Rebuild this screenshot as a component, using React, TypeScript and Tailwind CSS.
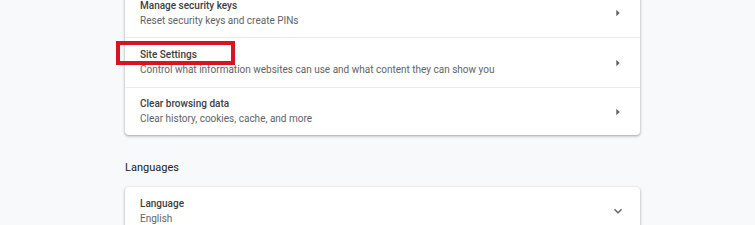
import React from "react";

const Arrow = () => (
  <svg width="16" height="16" viewBox="0 0 24 24" className="shrink-0">
    <path d="M9.5 7l5 5-5 5z" fill="#5f6368" />
  </svg>
);

const Chevron = () => (
  <svg width="16" height="16" viewBox="0 0 24 24" className="shrink-0">
    <path d="M16.59 8.59L12 13.17 7.41 8.59 6 10l6 6 6-6z" fill="#5f6368" />
  </svg>
);

const Row = ({ title, sub, h }: { title: string; sub: string; h: string }) => (
  <div className={`${h} flex items-center justify-between pl-[15px] pr-[14px]`}>
    <div className="flex flex-col">
      <div className="text-[10px] leading-[15px] font-medium text-[#3c4043]">{title}</div>
      <div className="text-[10px] leading-[16px] text-[#5f6368]">{sub}</div>
    </div>
    <Arrow />
  </div>
);

export default function App() {
  return (
    <div
      className="relative w-[755px] h-[225px] overflow-hidden bg-[#f8f9fa]"
      style={{ fontFamily: "Roboto, 'Liberation Sans', sans-serif" }}
    >
      <div className="ml-[125px] w-[515px] -mt-[11px]">
        <div className="bg-white rounded-[4px] shadow-[0_1px_2px_rgba(60,64,67,0.3),0_1px_3px_1px_rgba(60,64,67,0.15)]">
          <Row h="h-[48px]" title="Manage security keys" sub="Reset security keys and create PINs" />
          <div className="border-t border-[#e8eaed]">
            <Row
              h="h-[49px]"
              title="Site Settings"
              sub="Control what information websites can use and what content they can show you"
            />
          </div>
          <div className="border-t border-[#e8eaed]">
            <Row h="h-[47px]" title="Clear browsing data" sub="Clear history, cookies, cache, and more" />
          </div>
        </div>
        <div className="mt-[24px] text-[11px] leading-[18px] text-[#202124]">Languages</div>
        <div className="mt-[10px] bg-white rounded-[4px] shadow-[0_1px_2px_rgba(60,64,67,0.3),0_1px_3px_1px_rgba(60,64,67,0.15)]">
          <div className="h-[48px] flex items-center justify-between pl-[15px] pr-[14px]">
            <div className="flex flex-col">
              <div className="text-[10px] leading-[15px] font-medium text-[#3c4043]">Language</div>
              <div className="text-[10px] leading-[16px] text-[#5f6368]">English</div>
            </div>
            <Chevron />
          </div>
        </div>
      </div>
      <div className="absolute left-[116px] top-[41px] w-[119px] h-[24px] border-[4px] border-[#d9141f]" />
    </div>
  );
}
